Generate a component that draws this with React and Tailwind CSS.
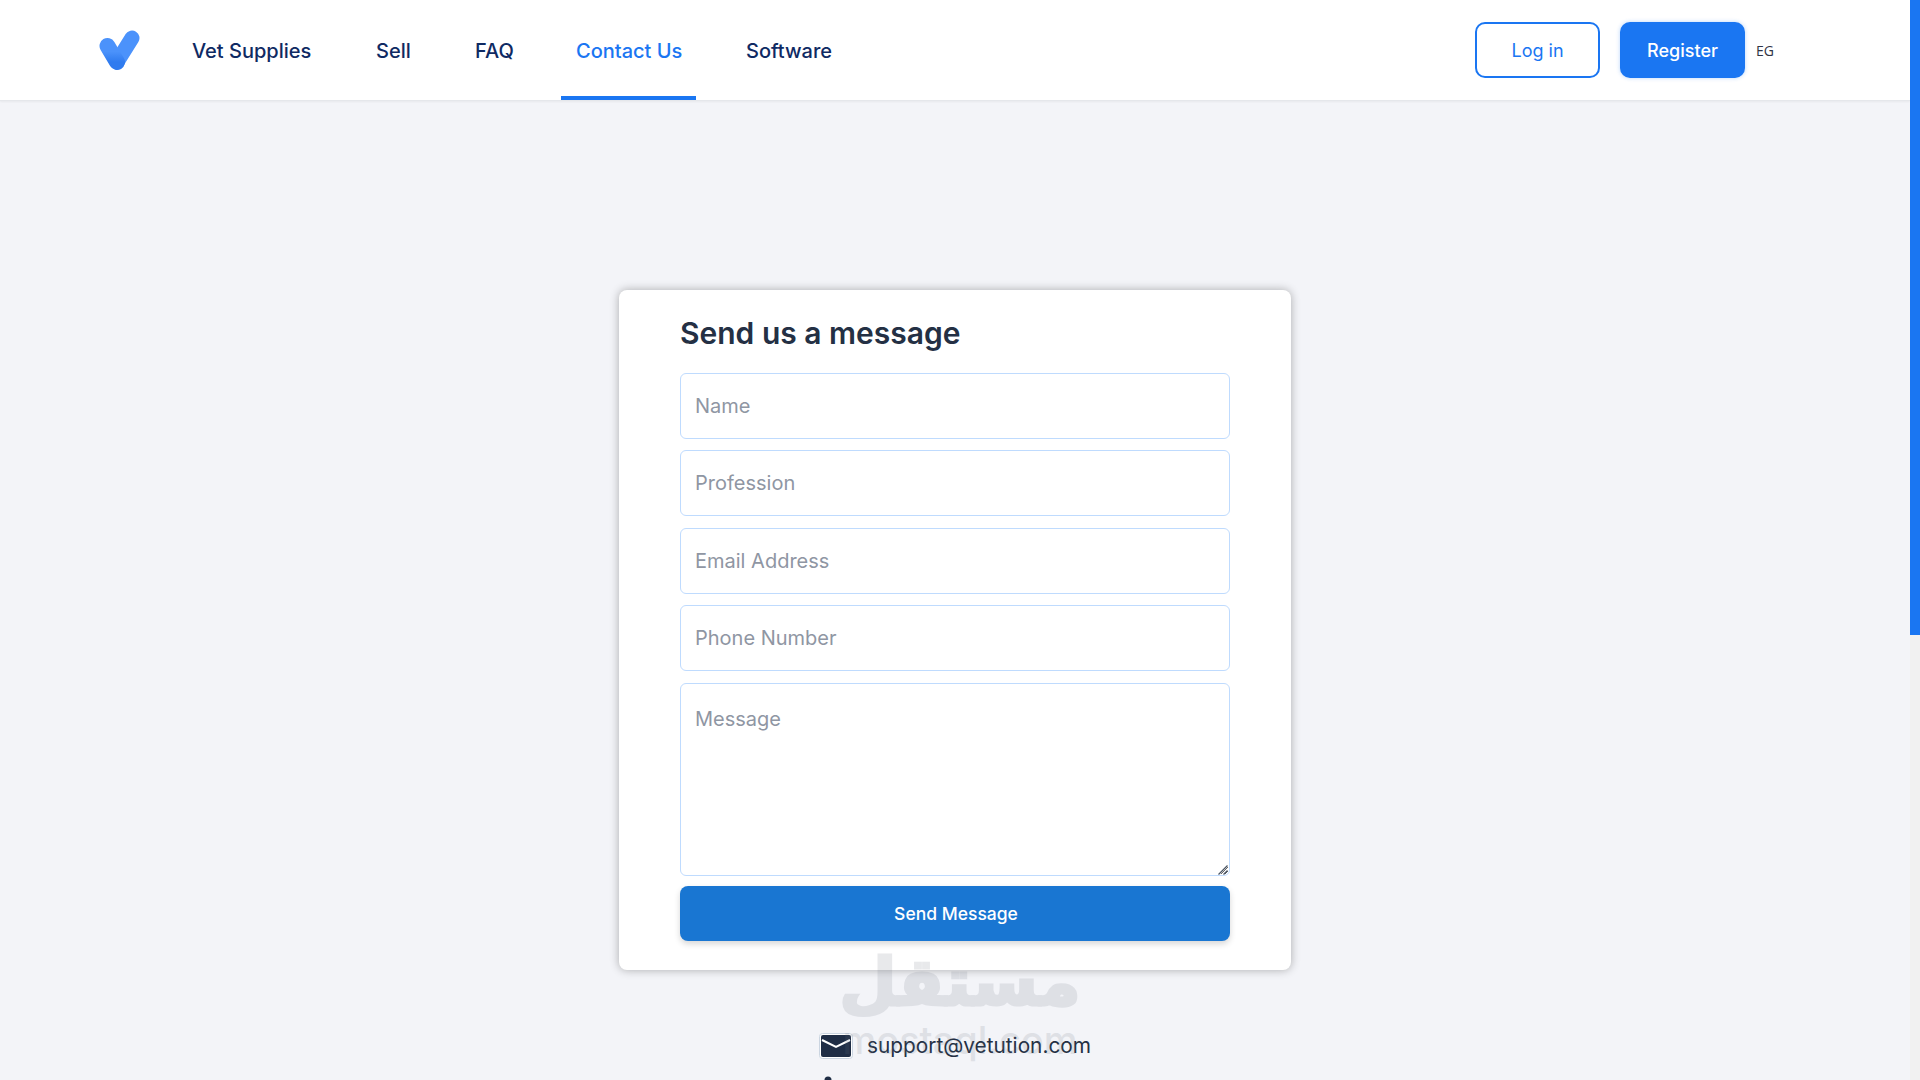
const navItems = [
  { label: 'Vet Supplies', width: 'w-[184px]' },
  { label: 'Sell', width: 'w-[99px]' },
  { label: 'FAQ', width: 'w-[101px]' },
  { label: 'Contact Us', width: 'w-[135px]', active: true },
  { label: 'Software', width: 'w-[150px]' },
]

const fields = ['Name', 'Profession', 'Email Address', 'Phone Number']

function Logo() {
  return (
    <svg width="42" height="42" viewBox="0 0 42 42" fill="none">
      <defs>
        <linearGradient id="logoLeft" x1="0" y1="0" x2="0" y2="1">
          <stop offset="0.35" stopColor="#4b92fb" />
          <stop offset="1" stopColor="#2f7bef" />
        </linearGradient>
      </defs>
      <path d="M33 9 L18 33" stroke="#4b92fb" strokeWidth="15" strokeLinecap="round" />
      <path d="M8.5 17 L18 33" stroke="url(#logoLeft)" strokeWidth="16" strokeLinecap="round" />
    </svg>
  )
}

function MailIcon() {
  return (
    <svg width="34" height="26" viewBox="0 0 34 26" fill="none">
      <rect x="0.5" y="0.5" width="33" height="25" rx="3" fill="#fff" stroke="#cbd5e1" />
      <rect x="2" y="2" width="30" height="22" rx="2" fill="#1f2d45" />
      <path d="M3 7 L17 14 L31 7" stroke="#fff" strokeWidth="2" fill="none" />
    </svg>
  )
}

function UserIcon() {
  return (
    <svg width="16" height="16" viewBox="0 0 16 16" fill="#1f2d45">
      <circle cx="8" cy="4" r="3.5" />
      <path d="M1 16 C1 10 15 10 15 16 Z" />
    </svg>
  )
}

function Header() {
  return (
    <header className="h-[101px] shrink-0 flex items-stretch bg-white border-b border-[#e5e7eb] shadow-[0_1px_2px_rgba(0,0,0,0.05)] pl-[99px]">
      <div className="w-[78px] flex items-center">
        <Logo />
      </div>
      <nav className="flex items-stretch">
        {navItems.map((item) => (
          <a
            key={item.label}
            className={`${item.width} flex items-center text-[20px] font-medium ${
              item.active
                ? 'text-[#1a76f2] border-b-[4px] border-[#1a76f2] pl-[15px] pt-[5px] mr-[35px]'
                : 'text-[#0f2a63] pl-[15px] pt-[1px]'
            }`}
          >
            {item.label}
          </a>
        ))}
      </nav>
      <div className="ml-auto flex items-center pr-[136px]">
        <button className="w-[125px] h-[56px] pt-[1px] rounded-[10px] border-2 border-[#1a76f2] text-[#1a76f2] text-[18px] bg-white">
          Log in
        </button>
        <button className="w-[125px] h-[56px] pt-[1px] ml-[20px] rounded-[10px] bg-[#1a76f2] text-white text-[18px] font-medium shadow-[0_0_4px_rgba(26,118,242,0.3)]">
          Register
        </button>
        <span className="ml-[11px] text-[14px] text-[#2f3344] font-['Open_Sans',sans-serif] font-medium">EG</span>
      </div>
    </header>
  )
}

function ContactForm() {
  return (
    <form className="w-[672px] h-[680px] shrink-0 bg-white rounded-[8px] shadow-[0_0_10px_rgba(0,0,0,0.3)] px-[61px] pt-[22px] flex flex-col">
      <h2 className="text-[30px] leading-[42px] font-semibold text-[#243044] mb-[18.9px]">Send us a message</h2>
      {fields.map((name) => (
        <input
          key={name}
          placeholder={name}
          className="h-[66px] shrink-0 mb-[11.5px] px-[14px] rounded-[6px] border border-[#bfdbfe] text-[20px] placeholder:text-[#8f96a3] outline-none"
        />
      ))}
      <div className="relative h-[193px] shrink-0">
        <textarea
          placeholder="Message"
          className="block w-full h-full px-[14px] py-[19px] rounded-[6px] border border-[#bfdbfe] text-[20px] leading-[32px] placeholder:text-[#8f96a3] outline-none"
        />
        <svg className="absolute right-[2px] bottom-[1px] pointer-events-none" width="10" height="10" viewBox="0 0 10 10" fill="none">
          <path d="M0.5 9.5 L9.5 0.5 M5.5 9.5 L9.5 5.5" stroke="#4b5563" strokeWidth="1.3" />
        </svg>
      </div>
      <button
        type="button"
        className="h-[55px] mt-[10px] pt-[1px] pl-[2px] shrink-0 rounded-[8px] bg-[#1976d2] text-white text-[17.5px] font-medium shadow-[0_3px_6px_rgba(0,0,0,0.16)]"
      >
        Send Message
      </button>
    </form>
  )
}

export default function App() {
  return (
    <div className="relative h-screen overflow-hidden flex bg-[#f3f4f8] font-['Inter',sans-serif]">
      <div className="flex-1 min-w-0 flex flex-col">
        <Header />
        <main className="flex-1 flex flex-col items-center pt-[189px]">
          <ContactForm />
          <div className="mt-[60px] flex flex-col gap-[15px]">
            <div className="flex items-center gap-[14px] text-[20.8px] text-[#243044]">
              <MailIcon />
              <span>support@vetution.com</span>
            </div>
            <div className="pl-[1px]">
              <UserIcon />
            </div>
          </div>
        </main>
      </div>
      <aside className="w-[10px] shrink-0 bg-[#f1f1f1]">
        <div className="h-[635px] bg-[#1a76f2]" />
      </aside>

      {/* watermark over the page */}
      <div className="absolute left-[845px] top-[938px] w-[230px] flex flex-col items-center pointer-events-none text-[#6b7280] opacity-15">
        <span dir="rtl" className="text-[66px] leading-[90px] font-bold font-['DejaVu_Sans',sans-serif] [-webkit-text-stroke:3px_#6b7280]">مستقل</span>
        <span className="mt-[-8px] text-[38px] leading-[40px] font-medium">mostaql.com</span>
      </div>
    </div>
  )
}
